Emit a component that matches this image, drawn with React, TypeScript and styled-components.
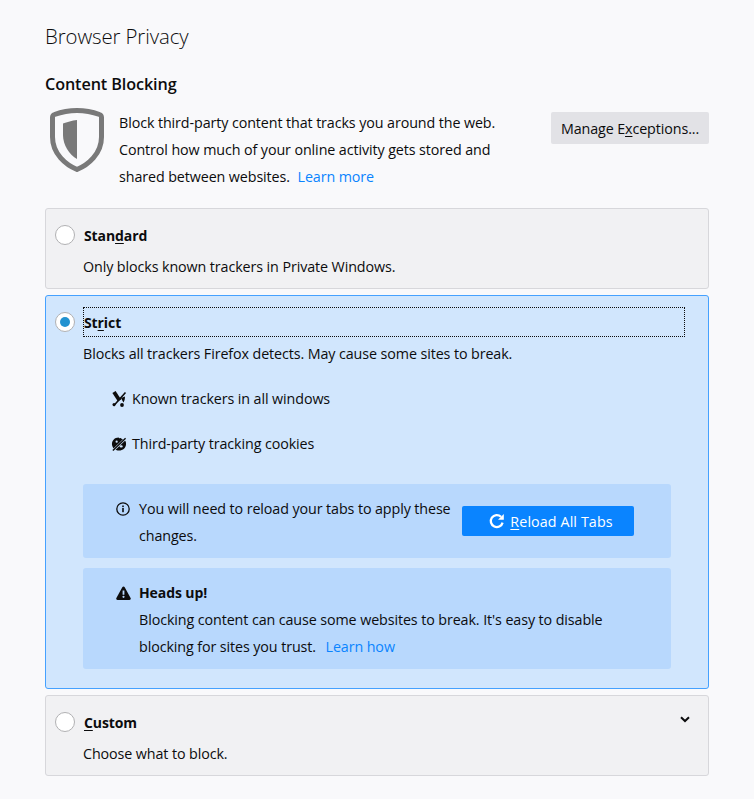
import React from "react";
import styled, { createGlobalStyle } from "styled-components";

const GlobalStyle = createGlobalStyle`
  html, body {
    margin: 0;
    padding: 0;
    background: #f9f9fb;
  }
  body {
    font-family: "Open Sans", "Noto Sans", sans-serif;
    font-size: 14.3px;
    line-height: 27px;
    color: #0c0c0d;
    letter-spacing: -0.1px;
  }
`;

const Key = styled.span`
  text-decoration: underline;
  text-underline-offset: 2px;
`;

const ShieldIcon = () => (
  <svg width="54" height="64" viewBox="0 0 54 64" fill="none">
    <path
      d="M27 2.5C20 2.5 10 4.5 4.5 6.5C3 7 2.5 8 2.5 9.5V29C2.5 46 16 57 27 61.5C38 57 51.5 46 51.5 29V9.5C51.5 8 51 7 49.5 6.5C44 4.5 34 2.5 27 2.5Z"
      stroke="#797979"
      strokeWidth="5"
      strokeLinejoin="round"
    />
    <path
      d="M27 12C22 12.5 17 14 13 15.5V27C13 37 19.5 47 27 51Z"
      fill="#797979"
    />
  </svg>
);

const TrackerIcon = () => (
  <svg width="16" height="16" viewBox="0 0 16 16" fill="none">
    <path d="M3 1L8.5 9.5" stroke="#0c0c0d" strokeWidth="3.8" />
    <path d="M14.5 1.5L2.5 15" stroke="#0c0c0d" strokeWidth="1.6" />
    <path d="M10 7L14 5.5C14 8 13.4 10 12.4 11.5Z" fill="#0c0c0d" />
    <circle cx="11" cy="14" r="1.9" fill="#0c0c0d" />
    <circle cx="3" cy="13.6" r="1.5" fill="#0c0c0d" />
  </svg>
);

const CookieIcon = () => (
  <svg width="16" height="16" viewBox="0 0 17 16" fill="none">
    <path
      d="M8 1c.8 1 1.8 1 2.6.7.4 1 1.4 1.4 2.4 1.3.2 1 1 1.6 2.2 1.6.6 1 .8 2.2.8 3.4 0 4-3.3 7-7.5 7S1 11.9 1 8s3-7 7-7z"
      fill="#0c0c0d"
    />
    <path d="M1.5 15.5L15 2.5" stroke="#d1e6fd" strokeWidth="2.6" />
    <path d="M2 15L15.5 2" stroke="#0c0c0d" strokeWidth="1.5" />
    <circle cx="6" cy="5.5" r="1.2" fill="#d1e6fd" />
    <ellipse cx="10.8" cy="10.6" rx="1.7" ry="1.2" fill="#d1e6fd" />
  </svg>
);

const InfoIcon = () => (
  <svg width="14" height="14" viewBox="0 0 14 14" fill="none">
    <circle cx="7" cy="7" r="6.2" stroke="#0c0c0d" strokeWidth="1.3" />
    <rect x="6.2" y="6" width="1.6" height="4.2" fill="#0c0c0d" />
    <rect x="6.2" y="3.5" width="1.6" height="1.6" fill="#0c0c0d" />
  </svg>
);

const WarningIcon = () => (
  <svg width="15" height="14" viewBox="0 0 15 14">
    <path
      fillRule="evenodd"
      fill="#0c0c0d"
      d="M7.5.4c.5 0 .9.3 1.2.8l5.9 10.9c.5.9-.1 1.8-1.1 1.8H1.5c-1 0-1.6-.9-1.1-1.8L6.3 1.2c.3-.5.7-.8 1.2-.8zM6.6 4.4v4.4h1.8V4.4zM7.5 9.7a1.1 1.1 0 1 0 0 2.2 1.1 1.1 0 0 0 0-2.2z"
    />
  </svg>
);

const ReloadIcon = () => (
  <svg width="16" height="16" viewBox="0 0 16 16" fill="none">
    <path d="M13.6 9.6A6 6 0 1 1 12 3.8" stroke="#fff" strokeWidth="2.3" />
    <path d="M14.8 1v5.8H9z" fill="#fff" />
  </svg>
);

const ChevronIcon = () => (
  <svg width="10" height="7" viewBox="0 0 10 7" fill="none">
    <path d="M1 1.2L5 5l4-3.8" stroke="#0c0c0d" strokeWidth="2" />
  </svg>
);

const Page = styled.main`
  padding: 20px 45px 0;
  height: 779px;
`;

const Title = styled.h1`
  margin: 0;
  font-size: 20.4px;
  font-weight: 300;
  line-height: 32px;
`;

const SectionTitle = styled.h2`
  margin: 19px 0 0;
  font-size: 16.2px;
  font-weight: 600;
  line-height: 27px;
`;

const Intro = styled.section`
  display: flex;
  align-items: flex-start;
  margin-top: 4px;
`;

const ShieldSlot = styled.div`
  width: 74px;
  padding: 6px 0 0 5px;
  box-sizing: border-box;
  flex: none;
  svg {
    display: block;
  }
`;

const IntroText = styled.p`
  margin: 7px 0 0;
  width: 432px;
  flex: none;
`;

const Link = styled.a<{ $tight?: boolean }>`
  color: #0a84ff;
  margin-left: ${(p) => (p.$tight ? "4px" : "6px")};
`;

const ManageButton = styled.button`
  margin: 10px 0 0 auto;
  width: 158px;
  height: 32px;
  border: 0;
  border-radius: 2px;
  background: #e2e2e6;
  color: #0c0c0d;
  font: inherit;
  letter-spacing: inherit;
  padding: 0;
`;

const Cards = styled.div`
  display: flex;
  flex-direction: column;
  gap: 6px;
  margin-top: 18px;
`;

const Card = styled.section<{ $selected?: boolean }>`
  box-sizing: border-box;
  border: 1px solid ${(p) => (p.$selected ? "#45a1ff" : "#d7d7db")};
  border-radius: 3px;
  background: ${(p) => (p.$selected ? "#d1e6fd" : "#f1f1f3")};
  padding: ${(p) => (p.$selected ? "11px 37px 19px 9px" : "11px 23px 8px 9px")};
`;

const CardHeader = styled.div<{ $focused?: boolean }>`
  position: relative;
  display: flex;
  align-items: center;
  height: 30px;
  margin-right: ${(p) => (p.$focused ? "-14px" : "0")};
`;

const FocusLabel = styled.div<{ $focused?: boolean }>`
  flex: 1;
  margin-left: 8px;
  height: 30px;
  line-height: 30px;
  font-size: 14px;
  font-weight: 700;
  box-sizing: border-box;
  border: 1px dotted ${(p) => (p.$focused ? "#0c0c0d" : "transparent")};
`;

const Radio = styled.span<{ $checked?: boolean }>`
  flex: none;
  box-sizing: border-box;
  width: 20px;
  height: 20px;
  border: 1px solid #b1b1b3;
  border-radius: 50%;
  background: #fff;
  display: flex;
  align-items: center;
  justify-content: center;
  &::after {
    content: "";
    display: ${(p) => (p.$checked ? "block" : "none")};
    width: 10px;
    height: 10px;
    border-radius: 50%;
    background: #2292d0;
  }
`;

const CardBody = styled.div`
  margin-left: 28px;
`;

const Description = styled.p`
  margin: 3px 0 0;
`;

const TrackerList = styled.ul`
  list-style: none;
  margin: 18px 0 0;
  padding: 0 0 0 28px;
  display: flex;
  flex-direction: column;
  gap: 18px;
`;

const TrackerRow = styled.li`
  display: flex;
  align-items: center;
  gap: 5px;
  svg {
    flex: none;
  }
`;

const InfoBox = styled.div<{ $first?: boolean }>`
  display: flex;
  align-items: flex-start;
  margin-top: ${(p) => (p.$first ? "27px" : "10px")};
  padding: 11px 37px 9px 33px;
  background: #b8d8fd;
  border-radius: 3px;
`;

const BoxIcon = styled.div`
  flex: none;
  width: 23px;
  height: 27px;
  display: flex;
  align-items: center;
`;

const BoxText = styled.div`
  flex: 1;
  min-width: 0;
`;

const BoxTitle = styled.div`
  font-size: 14px;
  font-weight: 700;
`;

const ReloadButton = styled.button`
  flex: none;
  margin: 11px 0 0 6px;
  width: 172px;
  height: 30px;
  border: 0;
  border-radius: 2px;
  background: #0a84ff;
  color: #fff;
  font: inherit;
  letter-spacing: 0.1px;
  display: flex;
  align-items: center;
  justify-content: center;
  gap: 5px;
  padding: 0 0 0 6px;
`;

const Chevron = styled.span`
  position: absolute;
  right: -5px;
  top: 9px;
  display: block;
  line-height: 0;
`;

export default function App() {
  return (
    <>
      <GlobalStyle />
      <Page>
        <Title>Browser Privacy</Title>
        <SectionTitle>Content Blocking</SectionTitle>
        <Intro>
          <ShieldSlot>
            <ShieldIcon />
          </ShieldSlot>
          <IntroText>
            Block third-party content that tracks you around the web.
            <br />
            Control how much of your online activity gets stored and
            <br />
            shared between websites. <Link $tight>Learn more</Link>
          </IntroText>
          <ManageButton>
            Manage E<Key>x</Key>ceptions...
          </ManageButton>
        </Intro>
        <Cards>
          <Card>
            <CardHeader>
              <Radio />
              <FocusLabel>
                Stan<Key>d</Key>ard
              </FocusLabel>
            </CardHeader>
            <CardBody>
              <Description>Only blocks known trackers in Private Windows.</Description>
            </CardBody>
          </Card>
          <Card $selected>
            <CardHeader $focused>
              <Radio $checked />
              <FocusLabel $focused>
                St<Key>r</Key>ict
              </FocusLabel>
            </CardHeader>
            <CardBody>
              <Description>
                Blocks all trackers Firefox detects. May cause some sites to break.
              </Description>
              <TrackerList>
                <TrackerRow>
                  <TrackerIcon />
                  Known trackers in all windows
                </TrackerRow>
                <TrackerRow>
                  <CookieIcon />
                  Third-party tracking cookies
                </TrackerRow>
              </TrackerList>
              <InfoBox $first>
                <BoxIcon>
                  <InfoIcon />
                </BoxIcon>
                <BoxText>
                  You will need to reload your tabs to apply these changes.
                </BoxText>
                <ReloadButton>
                  <ReloadIcon />
                  <span>
                    <Key>R</Key>eload All Tabs
                  </span>
                </ReloadButton>
              </InfoBox>
              <InfoBox>
                <BoxIcon>
                  <WarningIcon />
                </BoxIcon>
                <BoxText>
                  <BoxTitle>Heads up!</BoxTitle>
                  Blocking content can cause some websites to break. It's easy to disable
                  <br />
                  blocking for sites you trust. <Link>Learn how</Link>
                </BoxText>
              </InfoBox>
            </CardBody>
          </Card>
          <Card>
            <CardHeader>
              <Radio />
              <FocusLabel>
                <Key>C</Key>ustom
              </FocusLabel>
              <Chevron>
                <ChevronIcon />
              </Chevron>
            </CardHeader>
            <CardBody>
              <Description>Choose what to block.</Description>
            </CardBody>
          </Card>
        </Cards>
      </Page>
    </>
  );
}
